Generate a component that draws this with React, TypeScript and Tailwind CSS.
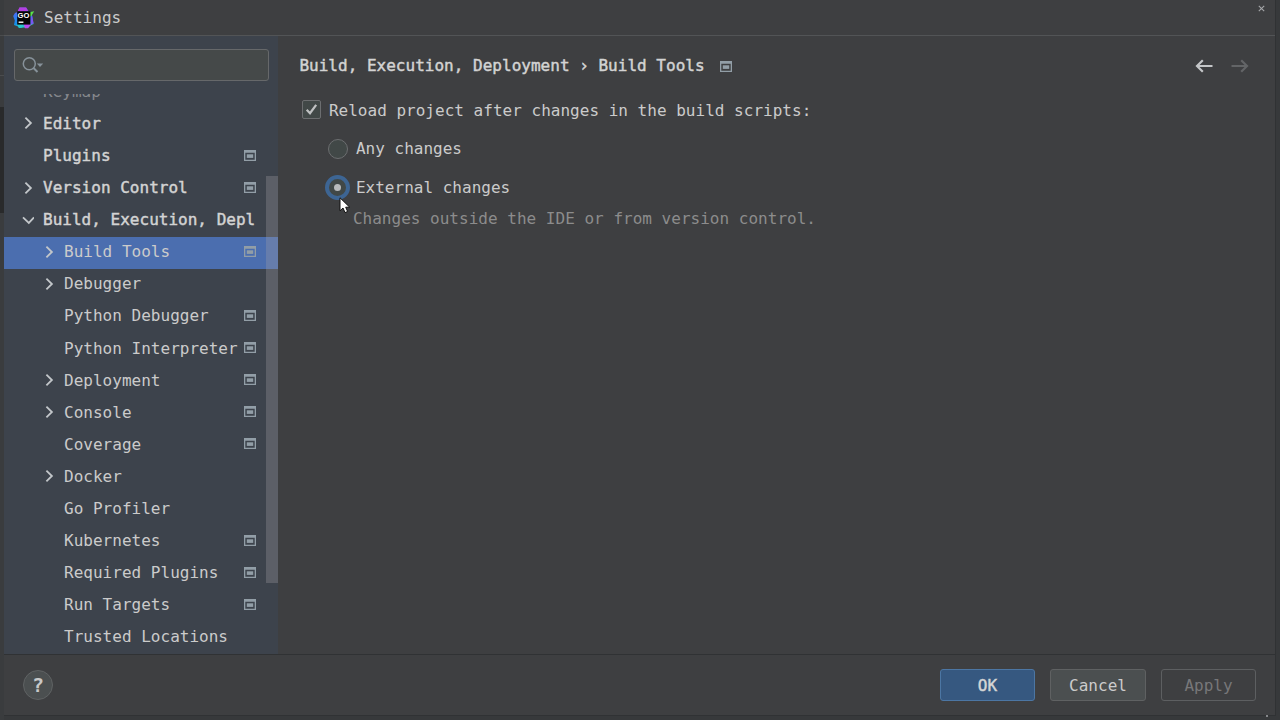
import React from 'react';

type Row = { label: string; level: 0 | 1; arrow?: 'right' | 'down'; project?: boolean; selected?: boolean };

const rows: Row[] = [
  { label: 'Editor', level: 0, arrow: 'right' },
  { label: 'Plugins', level: 0, project: true },
  { label: 'Version Control', level: 0, arrow: 'right', project: true },
  { label: 'Build, Execution, Depl', level: 0, arrow: 'down' },
  { label: 'Build Tools', level: 1, arrow: 'right', project: true, selected: true },
  { label: 'Debugger', level: 1, arrow: 'right' },
  { label: 'Python Debugger', level: 1, project: true },
  { label: 'Python Interpreter', level: 1, project: true },
  { label: 'Deployment', level: 1, arrow: 'right', project: true },
  { label: 'Console', level: 1, arrow: 'right', project: true },
  { label: 'Coverage', level: 1, project: true },
  { label: 'Docker', level: 1, arrow: 'right' },
  { label: 'Go Profiler', level: 1 },
  { label: 'Kubernetes', level: 1, project: true },
  { label: 'Required Plugins', level: 1, project: true },
  { label: 'Run Targets', level: 1, project: true },
  { label: 'Trusted Locations', level: 1 },
];

function ProjectIcon() {
  return (
    <svg width="12" height="11" viewBox="0 0 12 11" className="block shrink-0">
      <path d="M0 0H12V11H0ZM1.3 2.7V9.7H10.7V2.7Z" fill="#929ea7" fillRule="evenodd" />
      <rect x="2.8" y="4.3" width="6.4" height="3.6" fill="#929ea7" />
    </svg>
  );
}

function Chevron({ dir }: { dir: 'right' | 'down' }) {
  return (
    <svg width="12" height="12" viewBox="0 0 12 12" fill="none" stroke="#c3c7ca" strokeWidth="1.8" className="block">
      {dir === 'right' ? <path d="M3.4 0.7L8.9 6L3.4 11.3" /> : <path d="M1 3.4L6.8 8.9L12 3.4" />}
    </svg>
  );
}

function Logo() {
  return (
    <svg width="22" height="22" viewBox="0 0 22 22" className="block">
      <defs>
        <linearGradient id="rim" x1="0" y1="0" x2="0.35" y2="1">
          <stop offset="0" stopColor="#a04be8" />
          <stop offset="0.35" stopColor="#3d73f4" />
          <stop offset="0.75" stopColor="#168fe9" />
          <stop offset="1" stopColor="#26c9c3" />
        </linearGradient>
      </defs>
      <path d="M6.5 0.5L13 0.5L15.5 4L18.5 5L20.5 17L16.5 19L15 21L10 20.5L6 21L5 19.5L1 18L1.8 13.5L0.2 9L2 6L4.6 5Z" fill="url(#rim)" />
      <path d="M6.5 0.5L13.2 0.5L15.2 4.3L4.3 5Z" fill="#b43fe0" />
      <path d="M16 5.2L21.2 4.2L18 9.6H17.2Z" fill="#5be34a" />
      <path d="M10.5 17H18.5L15 21.2H12Z" fill="#b84bef" />
      <path d="M17.4 10L19.2 9L20.6 16.5L17.4 17.6Z" fill="#7a55f3" />
      <path d="M4 17H10L9.5 20.4L6 21Z" fill="#29c9cd" />
      <rect x="4.2" y="4.2" width="13.2" height="13.4" fill="#050505" />
      <text x="4.6" y="10.8" fontSize="7.6" fontWeight="700" fill="#fff" fontFamily="Liberation Sans, sans-serif">GO</text>
      <rect x="5.6" y="14.5" width="4.8" height="1.4" fill="#fff" />
    </svg>
  );
}

function TreeRow({ row }: { row: Row }) {
  const indent = row.level === 0 ? 'pl-[18px]' : 'pl-[39px]';
  return (
    <div className={`flex h-[32.1px] shrink-0 items-center pr-[22px] ${indent} ${row.selected ? 'bg-[#4b6eaf]' : ''}`}>
      <div className="w-[21px] shrink-0 pb-[2px]">{row.arrow && <Chevron dir={row.arrow} />}</div>
      <div
        className={`relative -top-[0.6px] whitespace-pre leading-5 ${row.level === 0 ? '[-webkit-text-stroke:0.45px_#d3d3d3] text-[#d3d3d3]' : 'text-[#cbcbcb]'}`}
      >
        {row.label}
      </div>
      {row.project && (
        <div className="ml-auto pb-[3px]">
          <ProjectIcon />
        </div>
      )}
    </div>
  );
}

export default function App() {
  return (
    <div className="relative flex h-[720px] w-[1280px] overflow-hidden bg-[#37393b] font-['DejaVu_Sans_Mono',monospace] text-[16px] tracking-[0.015px] text-[#cbcbcb]">
      <div className="flex w-1 shrink-0 flex-col bg-[#3a3c3e]">
        <div className="h-[36px] border-b border-[#4a4c4e]" />
        <div className="h-[40px] border-b border-[#4a4c4e]" />
        <div className="h-[31px]" />
        <div className="h-[106px] bg-[#292a2b]" />
      </div>
      <main className="flex h-[716px] w-[1272px] shrink-0 flex-col border-r border-b border-[#303234] bg-[#3e3f41]">
        <header className="flex h-9 shrink-0 items-center border-b border-[#525456]">
          <div className="ml-[9px]">
            <Logo />
          </div>
          <h1 className="ml-[9px] font-normal leading-5">Settings</h1>
          <svg width="7" height="7" viewBox="0 0 7 7" stroke="#a5a7a9" strokeWidth="1.1" className="mr-[10px] mb-[18px] ml-auto">
            <path d="M0.8 0.8L6.2 6.2M6.2 0.8L0.8 6.2" />
          </svg>
        </header>

        <div className="flex h-[619px] shrink-0 border-b border-[#303234]">
          <aside className="relative flex w-[274.4px] shrink-0 flex-col bg-[#3d434c]">
            <div className="mt-[13px] ml-[10px] flex h-8 w-[254.5px] shrink-0 items-center rounded-[3px] border border-[#66686a] bg-[#454949] pl-[7px]">
              <svg width="22" height="18" viewBox="0 0 22 18" fill="none" stroke="#87929a" strokeWidth="1.5">
                <circle cx="7.3" cy="7.8" r="6" />
                <path d="M11.5 12L15.5 16" strokeWidth="2" />
                <path d="M14.8 7.4H21.2L18 11Z" fill="#87929a" stroke="none" />
              </svg>
            </div>
            <div className="mt-[13px] flex flex-1 flex-col overflow-hidden">
              <div className="-mt-[17.7px] flex h-[32.1px] shrink-0 items-center pl-[39px]">
                <span className="relative -top-[0.4px] leading-5 text-[#85888d]">Keymap</span>
              </div>
              {rows.map((row) => (
                <TreeRow key={row.label} row={row} />
              ))}
            </div>
            <div className="absolute top-[140px] right-0 h-[407px] w-[12.4px] bg-[#a6a2a6]/30" />
          </aside>

          <section className="min-w-0 flex-1 pt-[19px] pl-[21px]">
            <div className="flex h-[22px] items-center">
              <div className="whitespace-pre leading-5 text-[#d3d3d3] [-webkit-text-stroke:0.45px_#d3d3d3]">
                Build, Execution, Deployment › Build Tools
              </div>
              <div className="ml-[15px] pt-px">
                <ProjectIcon />
              </div>
              <svg width="18" height="14" viewBox="0 0 18 14" fill="none" stroke="#c4c6c8" strokeWidth="2.2" className="mr-[18px] mb-px ml-auto">
                <path d="M17.5 7H2M7.8 1.2L2 7L7.8 12.8" />
              </svg>
              <svg width="18" height="14" viewBox="0 0 18 14" fill="none" stroke="#636567" strokeWidth="2.2" className="mr-[26px] mb-px">
                <path d="M0.5 7H16M10.2 1.2L16 7L10.2 12.8" />
              </svg>
            </div>
            <div className="mt-[22px] ml-[3px] flex h-[22px] items-center">
              <div className="mb-px flex h-[19px] w-[19px] items-center justify-center rounded-[2px] border border-[#6c6e70] bg-[#414847]">
                <svg width="13" height="13" viewBox="0 0 13 13" fill="none" stroke="#bfc1c2" strokeWidth="2.2">
                  <path d="M1.7 6.8L5 10.2L11.2 1.8" />
                </svg>
              </div>
              <span className="ml-[7.5px] pt-px leading-5">Reload project after changes in the build scripts:</span>
            </div>
            <div className="mt-[17px] ml-[28.5px] flex h-[22px] items-center">
              <div className="mb-px h-5 w-5 rounded-full border border-[#6c6e70] bg-[#414847]" />
              <span className="ml-[8px] leading-5">Any changes</span>
            </div>
            <div className="relative mt-[17px] ml-[26px] flex h-[22px] items-center">
              <div className="-mt-[5px] -mb-1 flex h-[25px] w-[25px] items-center justify-center rounded-full border-4 border-[#3d6593] bg-[#414847]">
                <div className="h-[7px] w-[7px] rounded-full bg-[#b8babc]" />
              </div>
              <span className="ml-[5.5px] leading-5">External changes</span>
              <svg width="12" height="18" viewBox="0 0 12 18" className="absolute top-[20px] left-[14px]">
                <path d="M1 0.8V13.8L4 11L6 15.6L8.6 14.5L6.7 10.2H10.7Z" fill="#fff" stroke="#111" strokeWidth="1" />
              </svg>
            </div>
            <div className="mt-[10px] ml-[53.5px] leading-5 text-[#8c8c8c]">Changes outside the IDE or from version control.</div>
          </section>
        </div>

        <footer className="flex flex-1 items-center pr-[19px] pl-[19px]">
          <button className="flex h-[30px] w-[30px] items-center justify-center rounded-full border border-[#5f6263] bg-[#4b4f50] text-[20px] font-bold text-[#c8c8c8]">?</button>
          <div className="ml-auto flex gap-[15px]">
            <button className="h-8 w-[95px] rounded-[3px] border border-[#4c76a3] bg-[#365880] pt-0.5 text-[#d5d5d5] [-webkit-text-stroke:0.45px_#d5d5d5]">OK</button>
            <button className="h-8 w-[96px] rounded-[3px] border border-[#5f6162] bg-[#4b4f50] pt-0.5">Cancel</button>
            <button className="h-8 w-[95px] rounded-[3px] border border-[#5d5f61] pt-0.5 text-[#777779]">Apply</button>
          </div>
        </footer>
      </main>
      <div className="absolute top-[715px] left-[1266px] h-0.5 w-0.5 bg-[#85878a]" />
    </div>
  );
}
